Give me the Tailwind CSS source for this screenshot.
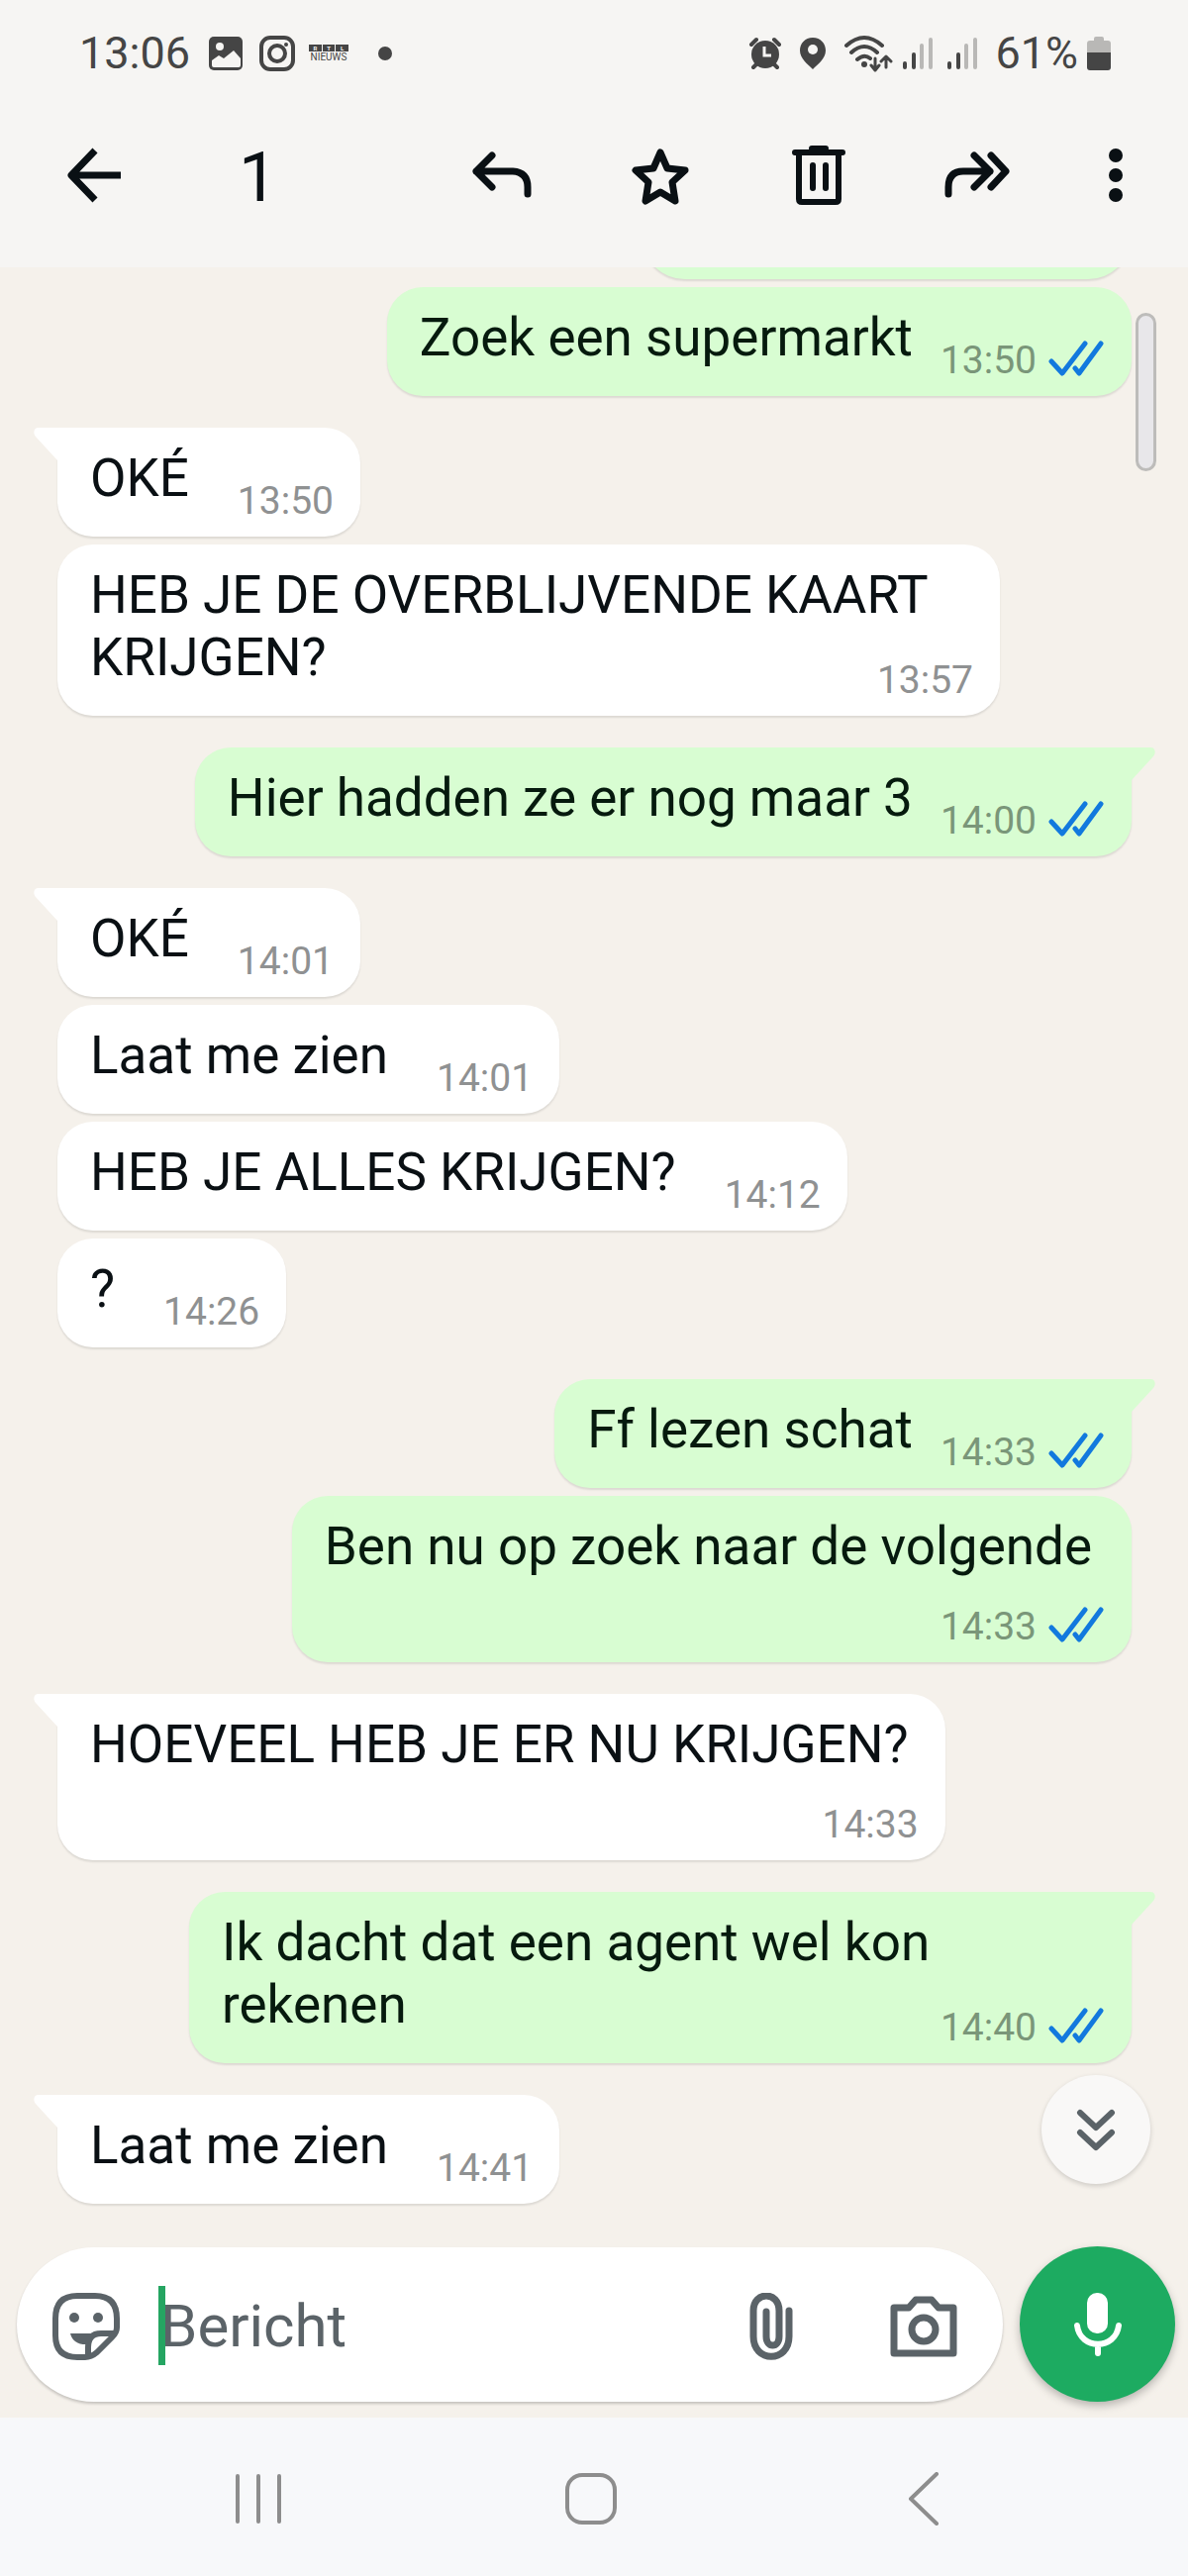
<!DOCTYPE html>
<html lang="nl">
<head>
  <meta charset="UTF-8">
  <meta name="viewport" content="width=device-width, initial-scale=1.0">
  <title>Chat</title>
  <script src="https://cdn.jsdelivr.net/npm/@tailwindcss/browser@4"></script>
</head>
<body class="min-h-screen flex flex-col bg-[#f5f1eb] font-[Roboto,'Liberation_Sans',sans-serif] text-[#0a1014]">
  <!-- Shared shapes -->
  <svg class="hidden">
    <symbol id="ticks" viewBox="0 0 56 40">
      <path d="M3 21L14 33L37 3M27 28L31 33L53 3" fill="none" stroke="#1279de" stroke-width="5" stroke-linecap="round" stroke-linejoin="round"/>
    </symbol>
    <symbol id="tail" viewBox="0 0 26 36">
      <path d="M26 0H5C0 0 -1 5 2 9L24 33L26 36Z" fill="currentColor"/>
    </symbol>
    <symbol id="signal" viewBox="0 0 32 34">
      <path d="M3 27V31M12 18V31" stroke="#454545" stroke-width="4" stroke-linecap="round"/>
      <path d="M20 9V31M29 3V31" stroke="#b9b8b6" stroke-width="4" stroke-linecap="round"/>
    </symbol>
  </svg>

  <header class="bg-[#f6f5f3] pb-6 relative z-10">
    <!-- Status bar -->
    <div class="h-[108px] pl-20 pr-[78px] flex items-center justify-between text-[#454545]">
      <div class="flex items-center">
        <span class="text-[45px] w-[130px]">13:06</span>
        <svg class="w-9 h-9" viewBox="0 0 36 36">
          <rect x="1" y="1" width="34" height="34" rx="5" fill="#454545"/>
          <circle cx="12" cy="11" r="4" fill="#f6f5f3"/>
          <path d="M4 25L11 20L16 23L26 15L33 23V30Q33 32 31 32H6Q4 32 4 30Z" fill="#f6f5f3"/>
        </svg>
        <svg class="w-[38px] h-[38px] ml-[15px]" viewBox="0 0 38 38" fill="none" stroke="#454545" stroke-width="4">
          <rect x="3" y="3" width="32" height="32" rx="9"/>
          <circle cx="19" cy="19" r="8"/>
          <circle cx="28" cy="10" r="2" fill="#454545" stroke="none"/>
        </svg>
        <div class="ml-[13px] w-10 flex flex-col">
          <div class="grid grid-cols-3 gap-px text-[6px] leading-[7px] font-bold text-center text-[#f6f5f3]">
            <span class="bg-[#454545]">R</span><span class="bg-[#454545]">T</span><span class="bg-[#454545]">L</span>
          </div>
          <span class="text-[10px] leading-[12px] text-center">NIEUWS</span>
        </div>
        <span class="ml-[30px] w-[14px] h-[14px] rounded-full bg-[#454545]"></span>
      </div>
      <div class="flex items-center">
        <svg class="w-[34px] h-[34px]" viewBox="0 0 34 34">
          <circle cx="17" cy="18" r="14" fill="#454545"/>
          <path d="M3 8L8 3M31 8L26 3M5 31L9 27M29 31L25 27" stroke="#454545" stroke-width="4" stroke-linecap="round"/>
          <path d="M16 10V19H23" fill="none" stroke="#f6f5f3" stroke-width="3"/>
        </svg>
        <svg class="w-7 h-[34px] ml-[17px]" viewBox="0 0 28 34">
          <path d="M14 1C6 1 1 7 1 14C1 22 9 28 14 33C19 28 27 22 27 14C27 7 22 1 14 1Z" fill="#454545"/>
          <circle cx="14" cy="13" r="5" fill="#f6f5f3"/>
        </svg>
        <svg class="w-[50px] h-[38px] ml-[17px]" viewBox="0 0 50 38" fill="none" stroke="#454545" stroke-width="4" stroke-linecap="round" stroke-linejoin="round">
          <path d="M3 11Q21 -5 39 11M8 18Q21 6 34 18M14 25Q21 19 27 24"/>
          <circle cx="21" cy="30" r="3" fill="#454545" stroke="none"/>
          <path d="M32 24V35M28 31L32 36L36 31M43 33V22M38 27L43 22L48 27" stroke-width="3"/>
        </svg>
        <svg class="w-8 h-[34px] ml-[9px]"><use href="#signal"/></svg>
        <svg class="w-8 h-[34px] ml-[13px]"><use href="#signal"/></svg>
        <span class="text-[45px] ml-[17px]">61%</span>
        <svg class="w-6 h-9 ml-[9px]" viewBox="0 0 24 36">
          <path d="M7 3Q7 1 9 1H15Q17 1 17 3V5H21Q24 5 24 8V18H0V8Q0 5 3 5H7Z" fill="#b9b8b6"/>
          <path d="M0 17H24V32Q24 35 21 35H3Q0 35 0 32Z" fill="#454545"/>
        </svg>
      </div>
    </div>

    <!-- Selection toolbar -->
    <div class="h-[138px] pl-[55px] pr-[53px] flex items-center">
      <button class="w-20 flex justify-center" aria-label="Terug">
        <svg class="w-14 h-14" viewBox="0 0 56 56" fill="none" stroke="#0a1014" stroke-width="7">
          <path d="M29 3L5 28L29 53M5 28H55" stroke-linejoin="round"/>
        </svg>
      </button>
      <span class="ml-[106px] pt-1 text-[70px] leading-[80px]">1</span>
      <div class="ml-auto flex items-center gap-20">
        <button class="w-20 flex justify-center" aria-label="Beantwoorden">
          <svg class="w-[60px] h-14" viewBox="0 0 60 56" fill="none" stroke="#0a1014" stroke-width="7" stroke-linecap="round" stroke-linejoin="round">
            <path d="M20 8L4 24L20 40M4 24H41Q56 25 56 40V47"/>
          </svg>
        </button>
        <button class="w-20 flex justify-center" aria-label="Ster">
          <svg class="w-[60px] h-[60px]" viewBox="0 0 60 60" fill="none" stroke="#0a1014" stroke-width="7" stroke-linejoin="round">
            <path d="M30 7L37 23L55 25L42 37L45 56L30 47L15 56L18 37L5 25L23 23Z"/>
          </svg>
        </button>
        <button class="w-20 flex justify-center" aria-label="Verwijderen">
          <svg class="w-14 h-[62px]" viewBox="0 0 56 62" fill="none" stroke="#0a1014" stroke-width="6" stroke-linecap="round" stroke-linejoin="round">
            <path d="M4 8H52M21 4H35M8 9V55Q8 58 11 58H45Q48 58 48 55V9M22 21V44M35 21V44"/>
          </svg>
        </button>
        <button class="w-20 flex justify-center" aria-label="Doorsturen">
          <svg class="w-[66px] h-14" viewBox="0 0 66 56" fill="none" stroke="#0a1014" stroke-width="7" stroke-linecap="round" stroke-linejoin="round">
            <path d="M4 47V40Q4 24 19 24H46M30 8L46 24L30 40M47 8L62 24L47 40"/>
          </svg>
        </button>
        <button class="w-10 flex justify-center" aria-label="Meer opties">
          <svg class="w-4 h-14" viewBox="0 0 16 56" fill="#0a1014">
            <circle cx="8" cy="8" r="7"/><circle cx="8" cy="28" r="7"/><circle cx="8" cy="48" r="7"/>
          </svg>
        </button>
      </div>
    </div>
  </header>

  <!-- Messages -->
  <main class="relative flex-1 overflow-hidden pl-[58px] pr-[57px] pb-[43px] flex flex-col gap-8 text-[53px] leading-[63px]">
    <section class="flex flex-col items-end gap-2 text-[#061a0e]">
      <div class="-mt-[98px] w-[495px] h-[110px] rounded-[44px] bg-[#d8fdd2] shadow-[0_2px_2px_rgba(0,0,0,0.1)]"></div>
      <div class="flex items-end gap-7 rounded-[36px] bg-[#d8fdd2] pt-5 pb-[13px] pl-[33px] pr-7 shadow-[0_2px_2px_rgba(0,0,0,0.1)]">
        <p class="pb-[14px]">Zoek een supermarkt</p>
        <div class="flex items-center gap-3 text-[39px] leading-[46px] text-[#7a9679]">
          <time>13:50</time><svg class="w-14 h-10"><use href="#ticks"/></svg>
        </div>
      </div>
    </section>

    <section class="flex flex-col items-start gap-2">
      <div class="relative flex items-end gap-[49px] rounded-[36px] rounded-tl-none bg-white pt-5 pb-[13px] pl-[33px] pr-[27px] shadow-[0_2px_2px_rgba(0,0,0,0.1)]">
        <svg class="absolute top-0 -left-6 w-[26px] h-9 text-white"><use href="#tail"/></svg>
        <p class="pb-[14px]">OKÉ</p>
        <time class="text-[39px] leading-[46px] text-[#8f9192]">13:50</time>
      </div>
      <div class="flow-root max-w-[952px] rounded-[36px] bg-white pt-5 pb-[13px] pl-[33px] pr-[27px] shadow-[0_2px_2px_rgba(0,0,0,0.1)]">
        HEB JE DE OVERBLIJVENDE KAART KRIJGEN?
        <time class="float-right mt-[31px] text-[39px] leading-[46px] text-[#8f9192]">13:57</time>
      </div>
    </section>

    <section class="flex flex-col items-end gap-2 text-[#061a0e]">
      <div class="relative flex items-end gap-7 rounded-[36px] rounded-tr-none bg-[#d8fdd2] pt-5 pb-[13px] pl-[33px] pr-7 shadow-[0_2px_2px_rgba(0,0,0,0.1)]">
        <svg class="absolute top-0 -right-6 w-[26px] h-9 -scale-x-100 text-[#d8fdd2]"><use href="#tail"/></svg>
        <p class="pb-[14px]">Hier hadden ze er nog maar 3</p>
        <div class="flex items-center gap-3 text-[39px] leading-[46px] text-[#7a9679]">
          <time>14:00</time><svg class="w-14 h-10"><use href="#ticks"/></svg>
        </div>
      </div>
    </section>

    <section class="flex flex-col items-start gap-2">
      <div class="relative flex items-end gap-[49px] rounded-[36px] rounded-tl-none bg-white pt-5 pb-[13px] pl-[33px] pr-[27px] shadow-[0_2px_2px_rgba(0,0,0,0.1)]">
        <svg class="absolute top-0 -left-6 w-[26px] h-9 text-white"><use href="#tail"/></svg>
        <p class="pb-[14px]">OKÉ</p>
        <time class="text-[39px] leading-[46px] text-[#8f9192]">14:01</time>
      </div>
      <div class="flex items-end gap-[49px] rounded-[36px] bg-white pt-5 pb-[13px] pl-[33px] pr-[27px] shadow-[0_2px_2px_rgba(0,0,0,0.1)]">
        <p class="pb-[14px]">Laat me zien</p>
        <time class="text-[39px] leading-[46px] text-[#8f9192]">14:01</time>
      </div>
      <div class="flex items-end gap-[49px] rounded-[36px] bg-white pt-5 pb-[13px] pl-[33px] pr-[27px] shadow-[0_2px_2px_rgba(0,0,0,0.1)]">
        <p class="pb-[14px]">HEB JE ALLES KRIJGEN?</p>
        <time class="text-[39px] leading-[46px] text-[#8f9192]">14:12</time>
      </div>
      <div class="flex items-end gap-[49px] rounded-[36px] bg-white pt-5 pb-[13px] pl-[33px] pr-[27px] shadow-[0_2px_2px_rgba(0,0,0,0.1)]">
        <p class="pb-[14px]">?</p>
        <time class="text-[39px] leading-[46px] text-[#8f9192]">14:26</time>
      </div>
    </section>

    <section class="flex flex-col items-end gap-2 text-[#061a0e]">
      <div class="relative flex items-end gap-7 rounded-[36px] rounded-tr-none bg-[#d8fdd2] pt-5 pb-[13px] pl-[33px] pr-7 shadow-[0_2px_2px_rgba(0,0,0,0.1)]">
        <svg class="absolute top-0 -right-6 w-[26px] h-9 -scale-x-100 text-[#d8fdd2]"><use href="#tail"/></svg>
        <p class="pb-[14px]">Ff lezen schat</p>
        <div class="flex items-center gap-3 text-[39px] leading-[46px] text-[#7a9679]">
          <time>14:33</time><svg class="w-14 h-10"><use href="#ticks"/></svg>
        </div>
      </div>
      <div class="flex flex-col gap-[26px] max-w-[952px] rounded-[36px] bg-[#d8fdd2] pt-5 pb-[13px] pl-[33px] pr-7 shadow-[0_2px_2px_rgba(0,0,0,0.1)]">
        <p class="pr-3">Ben nu op zoek naar de volgende</p>
        <div class="self-end flex items-center gap-3 text-[39px] leading-[46px] text-[#7a9679]">
          <time>14:33</time><svg class="w-14 h-10"><use href="#ticks"/></svg>
        </div>
      </div>
    </section>

    <section class="flex flex-col items-start gap-2">
      <div class="relative flex flex-col gap-[26px] max-w-[952px] rounded-[36px] rounded-tl-none bg-white pt-5 pb-[13px] pl-[33px] pr-[27px] shadow-[0_2px_2px_rgba(0,0,0,0.1)]">
        <svg class="absolute top-0 -left-6 w-[26px] h-9 text-white"><use href="#tail"/></svg>
        <p class="pr-[10px]">HOEVEEL HEB JE ER NU KRIJGEN?</p>
        <time class="self-end text-[39px] leading-[46px] text-[#8f9192]">14:33</time>
      </div>
    </section>

    <section class="flex flex-col items-end gap-2 text-[#061a0e]">
      <div class="relative flow-root max-w-[952px] rounded-[36px] rounded-tr-none bg-[#d8fdd2] pt-5 pb-[13px] pl-[33px] pr-7 shadow-[0_2px_2px_rgba(0,0,0,0.1)]">
        <svg class="absolute top-0 -right-6 w-[26px] h-9 -scale-x-100 text-[#d8fdd2]"><use href="#tail"/></svg>
        Ik dacht dat een agent wel kon rekenen
        <div class="float-right mt-[31px] flex items-center gap-3 text-[39px] leading-[46px] text-[#7a9679]">
          <time>14:40</time><svg class="w-14 h-10"><use href="#ticks"/></svg>
        </div>
      </div>
    </section>

    <section class="flex flex-col items-start gap-2">
      <div class="relative flex items-end gap-[49px] rounded-[36px] rounded-tl-none bg-white pt-5 pb-[13px] pl-[33px] pr-[27px] shadow-[0_2px_2px_rgba(0,0,0,0.1)]">
        <svg class="absolute top-0 -left-6 w-[26px] h-9 text-white"><use href="#tail"/></svg>
        <p class="pb-[14px]">Laat me zien</p>
        <time class="text-[39px] leading-[46px] text-[#8f9192]">14:41</time>
      </div>
    </section>

    <!-- Scrollbar thumb -->
    <div class="absolute top-[46px] right-8 w-[21px] h-40 rounded-full bg-[#e8e7ea] border-[3px] border-[#bdbcba]"></div>

    <button class="absolute bottom-[63px] right-[38px] w-[110px] h-[110px] rounded-full bg-[#f9f8f7] shadow-[0_2px_5px_rgba(0,0,0,0.16)] flex items-center justify-center" aria-label="Naar beneden">
      <svg class="w-10 h-11" viewBox="0 0 40 44" fill="none" stroke="#5b6368" stroke-width="6" stroke-linecap="round" stroke-linejoin="round">
        <path d="M4 5L20 20L36 5M4 25L20 40L36 25"/>
      </svg>
    </button>
  </main>

  <!-- Composer -->
  <form class="pl-[17px] pr-[13px] pb-4 flex items-center gap-[17px]">
    <div class="flex-1 min-w-0 h-[156px] pt-1 pl-[35px] pr-[46px] flex items-center rounded-full bg-white shadow-[0_2px_3px_rgba(0,0,0,0.2)]">
      <button type="button" aria-label="Emoji">
        <svg class="w-[70px] h-[70px]" viewBox="0 0 70 70" fill="none" stroke="#5b6368" stroke-width="6" stroke-linejoin="round">
          <path d="M26 4H44Q66 4 66 27V36Q66 41 61 46L46 61Q40 66 34 66H26Q4 66 4 44V27Q4 4 26 4Z"/>
          <path d="M37 65V56Q37 42 50 42H64" stroke-width="6"/>
          <circle cx="23" cy="26" r="5" fill="#5b6368" stroke="none"/>
          <circle cx="47" cy="26" r="5" fill="#5b6368" stroke="none"/>
          <path d="M19 42H44L37 53Q22 54 19 42Z" fill="#5b6368" stroke="none"/>
        </svg>
      </button>
      <div class="relative flex-1 min-w-0 ml-[38px]">
        <span class="absolute top-0 left-0 w-[7px] h-[80px] bg-[#25a562]"></span>
        <input type="text" placeholder="Bericht" aria-label="Bericht" class="block w-full h-[82px] pl-[2px] text-[60px] outline-none placeholder:text-[#5b6368]">
      </div>
      <button type="button" aria-label="Bijlage">
        <svg class="w-11 h-[68px]" viewBox="0 0 44 68" fill="none" stroke="#5b6368" stroke-width="7" stroke-linecap="round">
          <path d="M40 18V44C40 71 4 71 4 44V18C4 -2 30 -2 30 18V44C30 56 17 56 17 44V19"/>
        </svg>
      </button>
      <button type="button" class="ml-[98px]" aria-label="Camera">
        <svg class="w-[68px] h-[62px]" viewBox="0 0 68 62" fill="none" stroke="#5b6368" stroke-width="7" stroke-linejoin="round">
          <path d="M4 12H19L26 4H42L49 12H64V58H4Z"/>
          <circle cx="34" cy="34" r="12"/>
        </svg>
      </button>
    </div>
    <button type="button" class="w-[157px] h-[157px] rounded-full bg-[#1dab61] shadow-[0_4px_8px_rgba(0,0,0,0.25)] flex items-center justify-center" aria-label="Spraakbericht">
      <svg class="w-12 h-16" viewBox="0 0 48 64">
        <rect x="13" y="0" width="21" height="41" rx="10" fill="#fff"/>
        <path d="M3 33C6 58 42 58 45 33M24 53V61" fill="none" stroke="#fff" stroke-width="6" stroke-linecap="round"/>
      </svg>
    </button>
  </form>

  <!-- System navigation -->
  <nav class="h-40 pt-1 pl-[221px] pr-[227px] bg-[#f7f8fa] flex items-center justify-between">
    <button class="w-20 flex justify-center" aria-label="Recente apps">
      <svg class="w-[54px] h-[54px]" viewBox="0 0 54 54" stroke="#8d8d8d" stroke-width="4" stroke-linecap="round">
        <path d="M6 4V50M27 4V50M48 4V50"/>
      </svg>
    </button>
    <button class="w-20 flex justify-center" aria-label="Startscherm">
      <svg class="w-[54px] h-[54px]" viewBox="0 0 54 54" fill="none" stroke="#8d8d8d" stroke-width="4">
        <rect x="3" y="3" width="48" height="48" rx="15"/>
      </svg>
    </button>
    <button class="w-20 flex justify-center" aria-label="Vorige">
      <svg class="w-[54px] h-[54px]" viewBox="0 0 54 54" fill="none" stroke="#8d8d8d" stroke-width="4" stroke-linecap="round" stroke-linejoin="round">
        <path d="M40 2L14 27L40 52"/>
      </svg>
    </button>
  </nav>
</body>
</html>
